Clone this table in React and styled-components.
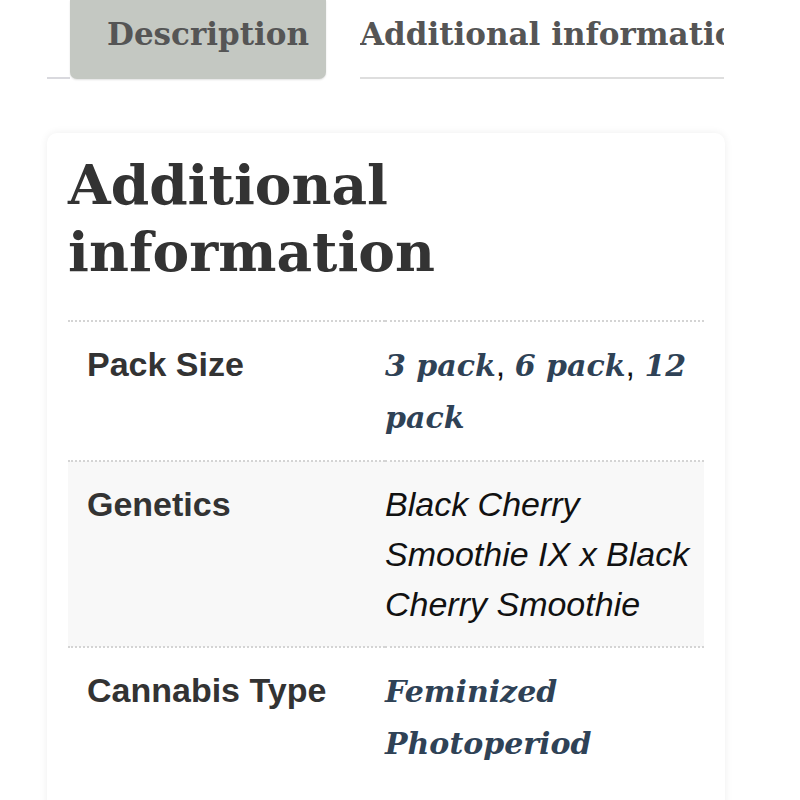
import styled, { createGlobalStyle } from 'styled-components';

const GlobalStyle = createGlobalStyle`
  html, body {
    margin: 0;
    padding: 0;
    background: #fff;
    overflow: hidden;
  }
`;

const rows = [
  { label: 'Pack Size', links: ['3 pack', '6 pack', '12 pack'] },
  { label: 'Genetics', text: 'Black Cherry Smoothie IX x Black Cherry Smoothie', alt: true },
  { label: 'Cannabis Type', links: ['Feminized Photoperiod'] },
];

const App = () => {
  return (
    <>
      <GlobalStyle />
      <Page>
        <TabBar>
          <TabSpacer />
          <ActiveTab>Description</ActiveTab>
          <TabGap />
          <Tab>Additional information</Tab>
        </TabBar>
        <Card>
          <Heading>Additional information</Heading>
          <Table>
            <tbody>
              {rows.map((row) => (
                <Row key={row.label} $alt={row.alt}>
                  <Label>{row.label}</Label>
                  <Value>
                    {row.links
                      ? row.links.map((l, i) => (
                          <span key={l}>
                            {i > 0 && ', '}
                            <LinkText href="#">{l}</LinkText>
                          </span>
                        ))
                      : <Plain>{row.text}</Plain>}
                  </Value>
                </Row>
              ))}
            </tbody>
          </Table>
        </Card>
      </Page>
    </>
  );
};

export default App;

const Page = styled.div`
  width: 800px;
  height: 800px;
  padding-left: 47px;
  box-sizing: border-box;
`;
const TabBar = styled.div`
  display: flex;
  width: 677px;
  height: 79px;
  align-items: stretch;
`;
const TabSpacer = styled.div`
  width: 23px;
  border-bottom: 2px solid #d9d9de;
`;
const ActiveTab = styled.div`
  width: 256px;
  box-sizing: border-box;
  padding: 16px 0 0 37px;
  background: #c4c8c2;
  border-radius: 0 0 7px 7px;
  box-shadow: 0 1px 2px rgba(0, 0, 0, 0.12);
  font-family: 'DejaVu Serif', Georgia, serif;
  font-weight: 700;
  font-size: 31px;
  color: #555;
`;
const TabGap = styled.div`
  width: 34px;
`;
const Tab = styled.div`
  flex: 1;
  overflow: hidden;
  white-space: nowrap;
  padding-top: 16px;
  border-bottom: 2px solid #dedede;
  font-family: 'DejaVu Serif', Georgia, serif;
  font-weight: 700;
  font-size: 31px;
  color: #555;
`;
const Card = styled.div`
  margin-top: 54px;
  width: 678px;
  height: 720px;
  box-sizing: border-box;
  padding: 18px 21px 0;
  background: #fff;
  border-radius: 10px;
  box-shadow: 0 0 8px rgba(0, 0, 0, 0.07);
`;
const Heading = styled.h2`
  margin: 0 0 35px;
  font-family: 'DejaVu Serif', Georgia, serif;
  font-weight: 700;
  font-size: 55px;
  line-height: 67px;
  color: #333;
`;
const Table = styled.table`
  width: 100%;
  border-collapse: collapse;
`;
const Row = styled.tr`
  background: ${(props) => (props.$alt ? '#f8f8f8' : 'transparent')};
  border-top: 2px dotted #d4d4d4;
`;
const Label = styled.th`
  width: 298px;
  padding: 17px 0 17px 19px;
  text-align: left;
  vertical-align: top;
  font-family: 'Liberation Sans', Arial, sans-serif;
  font-weight: 700;
  font-size: 34px;
  line-height: 50px;
  color: #333;
`;
const Value = styled.td`
  padding: 17px 8px 17px 0;
  vertical-align: top;
  font-family: 'Liberation Sans', Arial, sans-serif;
  font-size: 34px;
  line-height: 50px;
  color: #111;
`;
const LinkText = styled.a`
  font-family: 'DejaVu Serif', Georgia, serif;
  font-style: italic;
  font-weight: 700;
  font-size: 30px;
  color: #2f4256;
  text-decoration: none;
`;
const Plain = styled.span`
  font-style: italic;
`;
